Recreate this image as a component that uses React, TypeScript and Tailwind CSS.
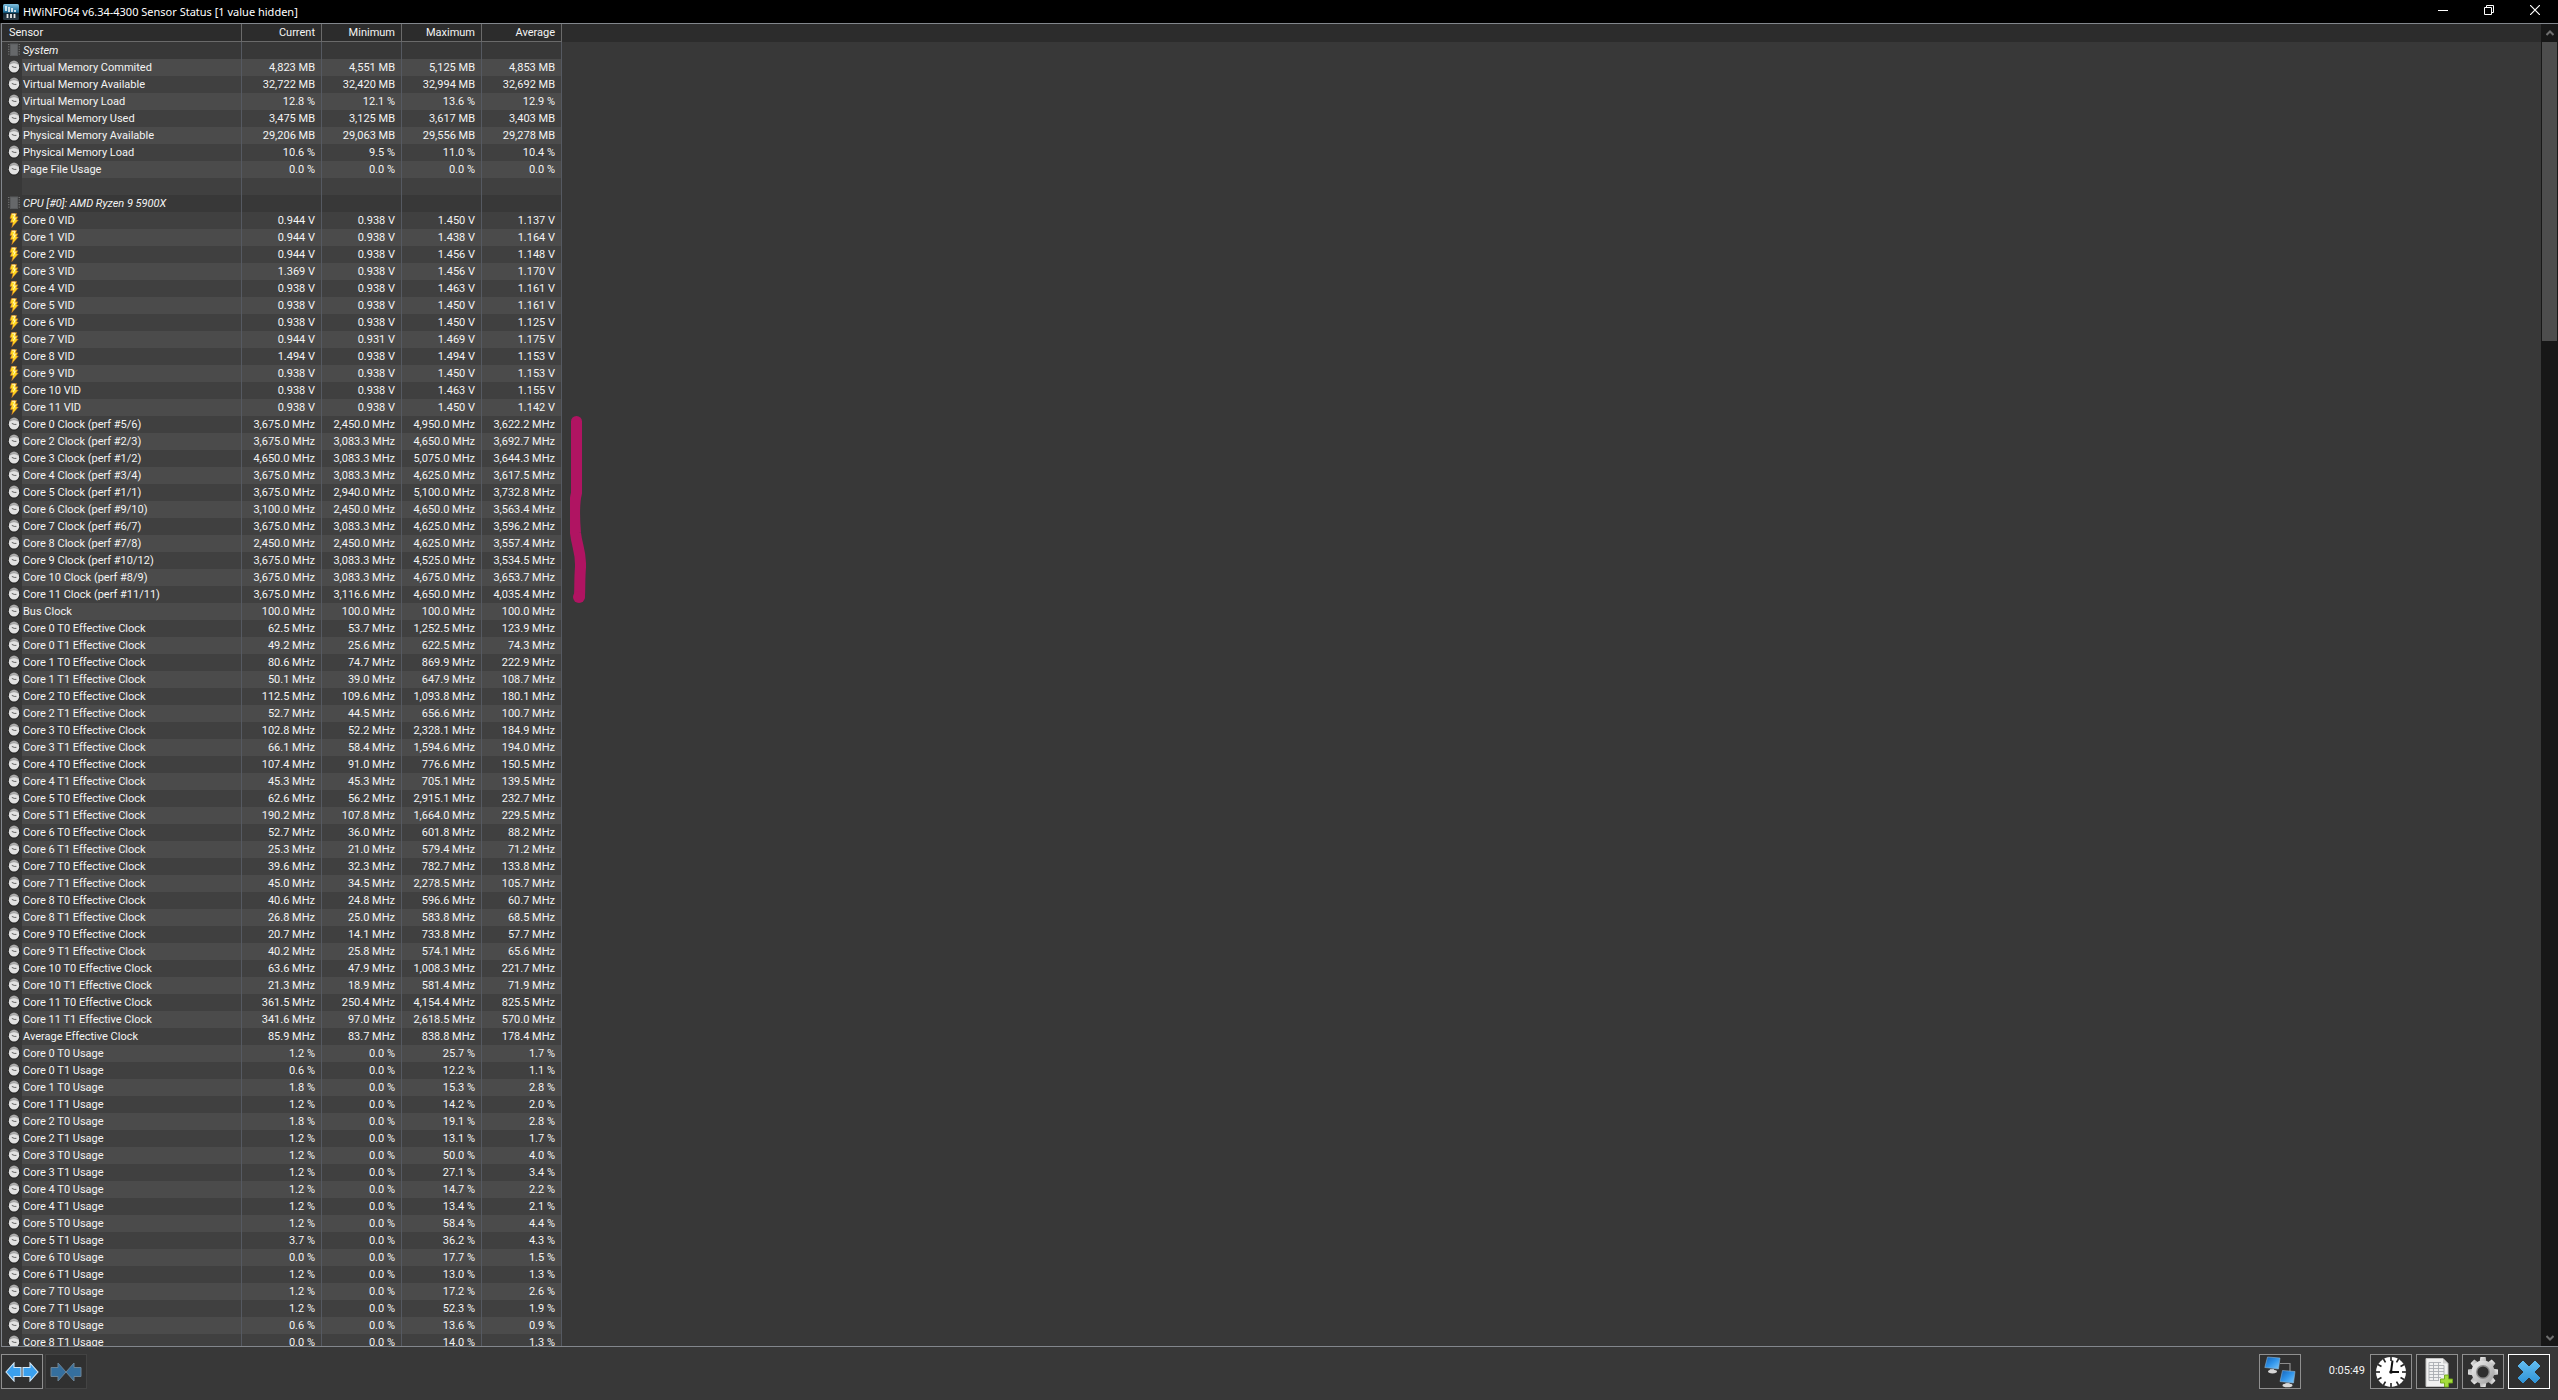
import type { ReactNode } from 'react';

type Kind = 'group' | 'clock' | 'volt' | 'blank';

interface Reading {
  kind: Kind;
  name: string;
  values: string[];
}

const COLUMNS = ['Current', 'Minimum', 'Maximum', 'Average'];

const group = (name: string): Reading => ({ kind: 'group', name, values: ['', '', '', ''] });
const blank: Reading = { kind: 'blank', name: '', values: ['', '', '', ''] };

// "name|current|minimum|maximum|average", the unit is shared by the whole block
function block(kind: Kind, unit: string, lines: string[]): Reading[] {
  return lines.map((line) => {
    const [name, ...nums] = line.split('|');
    return { kind, name, values: nums.map((n) => `${n} ${unit}`) };
  });
}

const READINGS: Reading[] = [
  group('System'),
  ...block('clock', 'MB', [
    'Virtual Memory Commited|4,823|4,551|5,125|4,853',
    'Virtual Memory Available|32,722|32,420|32,994|32,692',
  ]),
  ...block('clock', '%', ['Virtual Memory Load|12.8|12.1|13.6|12.9']),
  ...block('clock', 'MB', [
    'Physical Memory Used|3,475|3,125|3,617|3,403',
    'Physical Memory Available|29,206|29,063|29,556|29,278',
  ]),
  ...block('clock', '%', ['Physical Memory Load|10.6|9.5|11.0|10.4', 'Page File Usage|0.0|0.0|0.0|0.0']),
  blank,
  group('CPU [#0]: AMD Ryzen 9 5900X'),
  ...block('volt', 'V', [
    'Core 0 VID|0.944|0.938|1.450|1.137',
    'Core 1 VID|0.944|0.938|1.438|1.164',
    'Core 2 VID|0.944|0.938|1.456|1.148',
    'Core 3 VID|1.369|0.938|1.456|1.170',
    'Core 4 VID|0.938|0.938|1.463|1.161',
    'Core 5 VID|0.938|0.938|1.450|1.161',
    'Core 6 VID|0.938|0.938|1.450|1.125',
    'Core 7 VID|0.944|0.931|1.469|1.175',
    'Core 8 VID|1.494|0.938|1.494|1.153',
    'Core 9 VID|0.938|0.938|1.450|1.153',
    'Core 10 VID|0.938|0.938|1.463|1.155',
    'Core 11 VID|0.938|0.938|1.450|1.142',
  ]),
  ...block('clock', 'MHz', [
    'Core 0 Clock (perf #5/6)|3,675.0|2,450.0|4,950.0|3,622.2',
    'Core 2 Clock (perf #2/3)|3,675.0|3,083.3|4,650.0|3,692.7',
    'Core 3 Clock (perf #1/2)|4,650.0|3,083.3|5,075.0|3,644.3',
    'Core 4 Clock (perf #3/4)|3,675.0|3,083.3|4,625.0|3,617.5',
    'Core 5 Clock (perf #1/1)|3,675.0|2,940.0|5,100.0|3,732.8',
    'Core 6 Clock (perf #9/10)|3,100.0|2,450.0|4,650.0|3,563.4',
    'Core 7 Clock (perf #6/7)|3,675.0|3,083.3|4,625.0|3,596.2',
    'Core 8 Clock (perf #7/8)|2,450.0|2,450.0|4,625.0|3,557.4',
    'Core 9 Clock (perf #10/12)|3,675.0|3,083.3|4,525.0|3,534.5',
    'Core 10 Clock (perf #8/9)|3,675.0|3,083.3|4,675.0|3,653.7',
    'Core 11 Clock (perf #11/11)|3,675.0|3,116.6|4,650.0|4,035.4',
    'Bus Clock|100.0|100.0|100.0|100.0',
    'Core 0 T0 Effective Clock|62.5|53.7|1,252.5|123.9',
    'Core 0 T1 Effective Clock|49.2|25.6|622.5|74.3',
    'Core 1 T0 Effective Clock|80.6|74.7|869.9|222.9',
    'Core 1 T1 Effective Clock|50.1|39.0|647.9|108.7',
    'Core 2 T0 Effective Clock|112.5|109.6|1,093.8|180.1',
    'Core 2 T1 Effective Clock|52.7|44.5|656.6|100.7',
    'Core 3 T0 Effective Clock|102.8|52.2|2,328.1|184.9',
    'Core 3 T1 Effective Clock|66.1|58.4|1,594.6|194.0',
    'Core 4 T0 Effective Clock|107.4|91.0|776.6|150.5',
    'Core 4 T1 Effective Clock|45.3|45.3|705.1|139.5',
    'Core 5 T0 Effective Clock|62.6|56.2|2,915.1|232.7',
    'Core 5 T1 Effective Clock|190.2|107.8|1,664.0|229.5',
    'Core 6 T0 Effective Clock|52.7|36.0|601.8|88.2',
    'Core 6 T1 Effective Clock|25.3|21.0|579.4|71.2',
    'Core 7 T0 Effective Clock|39.6|32.3|782.7|133.8',
    'Core 7 T1 Effective Clock|45.0|34.5|2,278.5|105.7',
    'Core 8 T0 Effective Clock|40.6|24.8|596.6|60.7',
    'Core 8 T1 Effective Clock|26.8|25.0|583.8|68.5',
    'Core 9 T0 Effective Clock|20.7|14.1|733.8|57.7',
    'Core 9 T1 Effective Clock|40.2|25.8|574.1|65.6',
    'Core 10 T0 Effective Clock|63.6|47.9|1,008.3|221.7',
    'Core 10 T1 Effective Clock|21.3|18.9|581.4|71.9',
    'Core 11 T0 Effective Clock|361.5|250.4|4,154.4|825.5',
    'Core 11 T1 Effective Clock|341.6|97.0|2,618.5|570.0',
    'Average Effective Clock|85.9|83.7|838.8|178.4',
  ]),
  ...block('clock', '%', [
    'Core 0 T0 Usage|1.2|0.0|25.7|1.7',
    'Core 0 T1 Usage|0.6|0.0|12.2|1.1',
    'Core 1 T0 Usage|1.8|0.0|15.3|2.8',
    'Core 1 T1 Usage|1.2|0.0|14.2|2.0',
    'Core 2 T0 Usage|1.8|0.0|19.1|2.8',
    'Core 2 T1 Usage|1.2|0.0|13.1|1.7',
    'Core 3 T0 Usage|1.2|0.0|50.0|4.0',
    'Core 3 T1 Usage|1.2|0.0|27.1|3.4',
    'Core 4 T0 Usage|1.2|0.0|14.7|2.2',
    'Core 4 T1 Usage|1.2|0.0|13.4|2.1',
    'Core 5 T0 Usage|1.2|0.0|58.4|4.4',
    'Core 5 T1 Usage|3.7|0.0|36.2|4.3',
    'Core 6 T0 Usage|0.0|0.0|17.7|1.5',
    'Core 6 T1 Usage|1.2|0.0|13.0|1.3',
    'Core 7 T0 Usage|1.2|0.0|17.2|2.6',
    'Core 7 T1 Usage|1.2|0.0|52.3|1.9',
    'Core 8 T0 Usage|0.6|0.0|13.6|0.9',
    'Core 8 T1 Usage|0.0|0.0|14.0|1.3',
  ]),
];

/* ---------- row icons ---------- */

function ClockIcon() {
  return (
    <svg viewBox="0 0 12 15" className="block w-3 h-[15px]">
      <ellipse cx="6" cy="7.2" rx="6" ry="6.6" fill="#262626" />
      <ellipse cx="6" cy="5.8" rx="5" ry="5.4" fill="#a6a6a6" />
      <ellipse cx="6" cy="7.2" rx="5.2" ry="5.4" fill="#e2e2e2" />
      <path d="M2 4C4 2.2 8 2.2 10 4" stroke="#6c6c6c" strokeWidth=".7" fill="none" />
      <path d="M3.8 6.4 6.2 7.4 8.4 7.4" stroke="#555" strokeWidth=".9" fill="none" />
    </svg>
  );
}

function VoltIcon() {
  return (
    <svg viewBox="0 0 12 15" className="block w-3 h-[15px]">
      <path d="M3.4.5h5.2L7.6 3.8h2.2L8.3 7h2L3.8 14.6 5 9.4H2.4l1.4-4H2z" fill="#ffd91f" stroke="#d9752a" strokeWidth=".5" />
      <path d="M4.2 1.2h2.8L5.4 5.2h1.8L5.4 8.6" stroke="#fff6c4" strokeWidth="1" fill="none" />
    </svg>
  );
}

function ChipIcon() {
  return (
    <svg viewBox="0 0 12 15" className="block w-3 h-[15px]">
      <path d="M.8 1v12M11.2 1v12" stroke="#8c8c8c" strokeWidth="1" strokeDasharray="1 1.4" />
      <rect x="2" y=".5" width="8" height="12.5" fill="#5a5c5e" />
      <rect x="3" y="1.5" width="6" height="10.5" fill="#66686a" />
    </svg>
  );
}

const ICONS: Record<Kind, ReactNode> = {
  group: <ChipIcon />,
  clock: <ClockIcon />,
  volt: <VoltIcon />,
  blank: null,
};

/* ---------- toolbar icons ---------- */

const ARROW_RIGHT = 'M1 5.5h7V1l8 9-8 9v-4.5H1z';
const ARROW_LEFT = 'M16 5.5H9V1L1 10l8 9v-4.5h7z';

function ExpandIcon() {
  return (
    <svg viewBox="0 0 34 20" className="block w-[34px] h-5">
      <g fill="#3aa0ee" stroke="#d5e9f8" strokeWidth="1.1">
        <path d={ARROW_LEFT} />
        <path d={ARROW_RIGHT} transform="translate(17)" />
      </g>
    </svg>
  );
}

function CollapseIcon() {
  return (
    <svg viewBox="0 0 34 20" className="block w-[34px] h-5">
      <g fill="#356f9e" stroke="#6d8496" strokeWidth="1">
        <path d={ARROW_RIGHT} transform="translate(1)" />
        <path d={ARROW_LEFT} transform="translate(16)" />
      </g>
    </svg>
  );
}

function NetworkIcon() {
  return (
    <svg viewBox="0 0 32 32" className="block w-8 h-8">
      <defs>
        <linearGradient id="screen" x1="0" y1="0" x2="1" y2="1">
          <stop offset="0" stopColor="#1560b4" />
          <stop offset=".5" stopColor="#2f94ea" />
          <stop offset="1" stopColor="#7cc8fb" />
        </linearGradient>
      </defs>
      <path d="M16 7.5h10v9" stroke="#8d8d8d" strokeWidth="1.2" fill="none" />
      <path d="M3.5 1 16 2 14.5 13 .8 11.5z" fill="url(#screen)" stroke="#8fb3d0" strokeWidth=".6" />
      <path d="M6 13h4l.5 2h-5z" fill="#b8b8b8" />
      <ellipse cx="8.5" cy="15.6" rx="4.5" ry="1.8" fill="#d8d8d8" />
      <path d="M18.5 14.5 31 15.5 29.5 27 16 25.500z" fill="url(#screen)" stroke="#8fb3d0" strokeWidth=".6" />
      <path d="M21.5 27h4l.5 2h-5z" fill="#b8b8b8" />
      <ellipse cx="23.5" cy="29.4" rx="5" ry="1.8" fill="#d8d8d8" />
    </svg>
  );
}

function BigClockIcon() {
  return (
    <svg viewBox="0 0 32 32" className="block w-8 h-8">
      <circle cx="16" cy="16" r="15" fill="#fff" />
      <g stroke="#222" strokeWidth="1.6">
        {Array.from({ length: 12 }, (_, i) => (
          <path key={i} d="M16 1v4" transform={`rotate(${i * 30} 16 16)`} />
        ))}
      </g>
      <path d="M17.5 4.5 16 16h8" stroke="#111" strokeWidth="2" fill="none" />
      <circle cx="16" cy="16" r="1.8" fill="#111" />
    </svg>
  );
}

function ReportIcon() {
  return (
    <svg viewBox="0 0 32 32" className="block w-8 h-8">
      <path d="M5 2.5h17l5 5v23H5z" fill="#f1f1f1" stroke="#c2c2c2" />
      <path d="M22 2.5v5h5z" fill="#cfcfcf" />
      <path
        d="M8 6.5h12M8 9.5h15M8 12.5h15M8 15.5h15M8 18.5h15M8 21.5h12M8 24.5h10M8 6.5v18M12.5 6.5v18M17.5 6.5v18M23 9.5v9"
        stroke="#a9adb1"
        strokeWidth=".9"
        fill="none"
      />
      <path d="M23.5 19h4v4h4v4h-4v4h-4v-4h-4v-4h4z" fill="#a5dc3c" stroke="#6fa51c" strokeWidth=".9" />
    </svg>
  );
}

function GearIcon() {
  return (
    <svg viewBox="0 0 32 32" className="block w-8 h-8">
      <defs>
        <linearGradient id="steel" x1="0" y1="0" x2="1" y2="1">
          <stop offset="0" stopColor="#f2f2f2" />
          <stop offset="1" stopColor="#9c9c9c" />
        </linearGradient>
      </defs>
      <g fill="url(#steel)">
        {Array.from({ length: 8 }, (_, i) => (
          <path key={i} d="M13.4 1h5.2l1 6h-7.2z" transform={`rotate(${i * 45} 16 16)`} />
        ))}
        <circle cx="16" cy="16" r="11.5" />
      </g>
      <circle cx="16" cy="16" r="7" fill="#8d8d8d" />
      <circle cx="16" cy="16" r="5.6" fill="#2f2f2f" />
    </svg>
  );
}

function CrossIcon() {
  return (
    <svg viewBox="0 0 24 24" className="block w-6 h-6">
      <defs>
        <linearGradient id="cross" x1="0" y1="0" x2="0" y2="1">
          <stop offset="0" stopColor="#63bdf0" />
          <stop offset="1" stopColor="#2f93d6" />
        </linearGradient>
      </defs>
      <path
        d="M6 1 12 7l6-6 5 5-6 6 6 6-5 5-6-6-6 6-5-5 6-6-6-6z"
        fill="url(#cross)"
        stroke="url(#cross)"
        strokeWidth="1"
        strokeLinejoin="round"
      />
    </svg>
  );
}

function LogoIcon() {
  return (
    <svg viewBox="0 0 16 16" className="block w-4 h-4">
      <defs>
        <linearGradient id="logo" x1="0" y1="0" x2="0" y2="1">
          <stop offset="0" stopColor="#7fc0e0" />
          <stop offset=".5" stopColor="#1d6c96" />
          <stop offset=".6" stopColor="#10222e" />
          <stop offset="1" stopColor="#2c3a44" />
        </linearGradient>
      </defs>
      <rect width="16" height="16" rx="1.5" fill="url(#logo)" />
      <path d="M3 2v5M6 3v5M9 4v4M12 6v2" stroke="#fff" strokeWidth="1.5" />
      <path d="M4.5 10v4M8 10v4M11.5 10v4" stroke="#e8e8e8" strokeWidth="1.8" />
    </svg>
  );
}

/* ---------- window parts ---------- */

function TitleBar() {
  return (
    <header className="flex items-start h-[23px] shrink-0 bg-black text-white">
      <div className="flex items-center gap-1 h-[23px] pl-[3px]">
        <LogoIcon />
        <h1 className="text-[11px] leading-4 whitespace-nowrap font-['Noto_Sans',sans-serif]">
          HWiNFO64 v6.34-4300 Sensor Status [1 value hidden]
        </h1>
      </div>
      <div className="flex ml-auto">
        <button aria-label="Minimize" className="flex items-center justify-center w-[46px] h-5">
          <svg viewBox="0 0 10 10" className="w-[10px] h-[10px]" stroke="#fff">
            <path d="M0 5.5h10" />
          </svg>
        </button>
        <button aria-label="Restore" className="flex items-center justify-center w-[46px] h-5">
          <svg viewBox="0 0 10 10" className="w-[10px] h-[10px]" stroke="#fff" fill="none">
            <path d="M.5 2.5h7v7h-7zM2.5 2.5v-2h7v7h-2" />
          </svg>
        </button>
        <button aria-label="Close" className="flex items-center justify-center w-[46px] h-5">
          <svg viewBox="0 0 10 10" className="w-[10px] h-[10px]" stroke="#fff" strokeWidth="1.2">
            <path d="M0 0l10 10M10 0L0 10" />
          </svg>
        </button>
      </div>
    </header>
  );
}

function SensorRow({ reading, index }: { reading: Reading; index: number }) {
  const stripe =
    reading.kind === 'group' ? 'bg-[#383838]' : index % 2 === 1 ? 'bg-[#4b4b4b]' : 'bg-[#404040]';
  return (
    <tr className="h-[17px]">
      <td className="p-0 pl-[6px] bg-[#383838]">{ICONS[reading.kind]}</td>
      <th
        scope="row"
        className={`p-0 pt-px pl-px text-left font-normal border-r border-[#555961] ${stripe} ${reading.kind === 'group' ? 'italic' : ''}`}
      >
        {reading.name}
      </th>
      {reading.values.map((v, i) => (
        <td key={i} className={`p-0 pt-px pr-[6px] text-right border-r border-[#555961] ${stripe}`}>
          {v}
        </td>
      ))}
    </tr>
  );
}

function SensorTable() {
  return (
    <table className="table-fixed border-separate border-spacing-0 w-[560px] text-[11px] leading-4 whitespace-nowrap text-[#f4f4f4]">
      <colgroup>
        <col className="w-5" />
        <col className="w-[220px]" />
        <col className="w-20" />
        <col className="w-20" />
        <col className="w-20" />
        <col className="w-20" />
      </colgroup>
      <thead>
        <tr className="h-[18px]">
          <th colSpan={2} scope="col" className="p-0 pl-[7px] text-left font-normal border-r border-b border-[#6a6a6a]">
            Sensor
          </th>
          {COLUMNS.map((c) => (
            <th key={c} scope="col" className="p-0 pr-[6px] text-right font-normal border-r border-b border-[#6a6a6a]">
              {c}
            </th>
          ))}
        </tr>
      </thead>
      <tbody>
        {READINGS.map((r, i) => (
          <SensorRow key={i} reading={r} index={i} />
        ))}
      </tbody>
    </table>
  );
}

// Marker stroke next to the core clock rows
function MarkerStroke() {
  return (
    <svg viewBox="0 0 16 190" className="absolute left-[568px] top-[391px] w-4 h-[190px]" fill="none">
      <path
        d="M6.5 6.5V78C4 88 4 100 5.5 118C7 132 11 136 10.5 152C9.5 164 10 172 9.5 181"
        stroke="#b01462"
        strokeWidth="11"
        strokeLinecap="round"
        strokeLinejoin="round"
      />
      <circle cx="9" cy="182" r="6" fill="#b01462" />
    </svg>
  );
}

function ScrollBar() {
  return (
    <div className="flex flex-col w-[17px] shrink-0 bg-[#171717]">
      <button aria-label="Scroll up" className="flex items-center justify-center h-[18px]">
        <svg viewBox="0 0 8 6" className="w-2 h-[6px]" fill="none" stroke="#6e6e6e" strokeWidth="2">
          <path d="M.5 5 4 1.5 7.5 5" />
        </svg>
      </button>
      <div className="flex-1 px-px">
        <div className="h-[299px] bg-[#4d4d4d]" />
      </div>
      <button aria-label="Scroll down" className="flex items-center justify-center h-[17px]">
        <svg viewBox="0 0 8 6" className="w-2 h-[6px]" fill="none" stroke="#6e6e6e" strokeWidth="2">
          <path d="M.5 1 4 4.5 7.5 1" />
        </svg>
      </button>
    </div>
  );
}

function ToolButton({ label, tone = 'border-[#8f8f8f]', disabled, children }: {
  label: string;
  tone?: string;
  disabled?: boolean;
  children: ReactNode;
}) {
  return (
    <button
      aria-label={label}
      disabled={disabled}
      className={`flex items-center justify-center w-[42px] h-[35px] border bg-[#303030] ${tone}`}
    >
      {children}
    </button>
  );
}

function ToolBar() {
  return (
    <footer className="flex items-start h-[53px] shrink-0 pt-[7px] pl-px pr-2">
      <div className="flex gap-[2px]">
        <ToolButton label="Expand columns">
          <ExpandIcon />
        </ToolButton>
        <ToolButton label="Shrink columns" tone="border-[#434343]" disabled>
          <CollapseIcon />
        </ToolButton>
      </div>
      <div className="flex items-center gap-1 ml-auto">
        <ToolButton label="Network">
          <NetworkIcon />
        </ToolButton>
        <time className="w-[61px] pr-px pb-[2px] text-[11px] leading-4 text-right text-[#f4f4f4]">0:05:49</time>
        <ToolButton label="Reset clock">
          <BigClockIcon />
        </ToolButton>
        <ToolButton label="Start logging">
          <ReportIcon />
        </ToolButton>
        <ToolButton label="Settings">
          <GearIcon />
        </ToolButton>
        <ToolButton label="Close sensors" tone="border-white">
          <CrossIcon />
        </ToolButton>
      </div>
    </footer>
  );
}

export default function App() {
  return (
    <div className="flex flex-col h-screen overflow-hidden bg-[#383838] font-[Roboto,sans-serif]">
      <TitleBar />
      <main className="flex flex-1 min-h-0 ml-px border border-r-0 border-[#82868c]">
        <div className="relative flex-1 overflow-hidden">
          <div className="absolute inset-x-0 top-0 h-[18px] bg-[#2c2c2c]" />
          <div className="relative">
            <SensorTable />
          </div>
          <MarkerStroke />
        </div>
        <ScrollBar />
      </main>
      <ToolBar />
    </div>
  );
}
